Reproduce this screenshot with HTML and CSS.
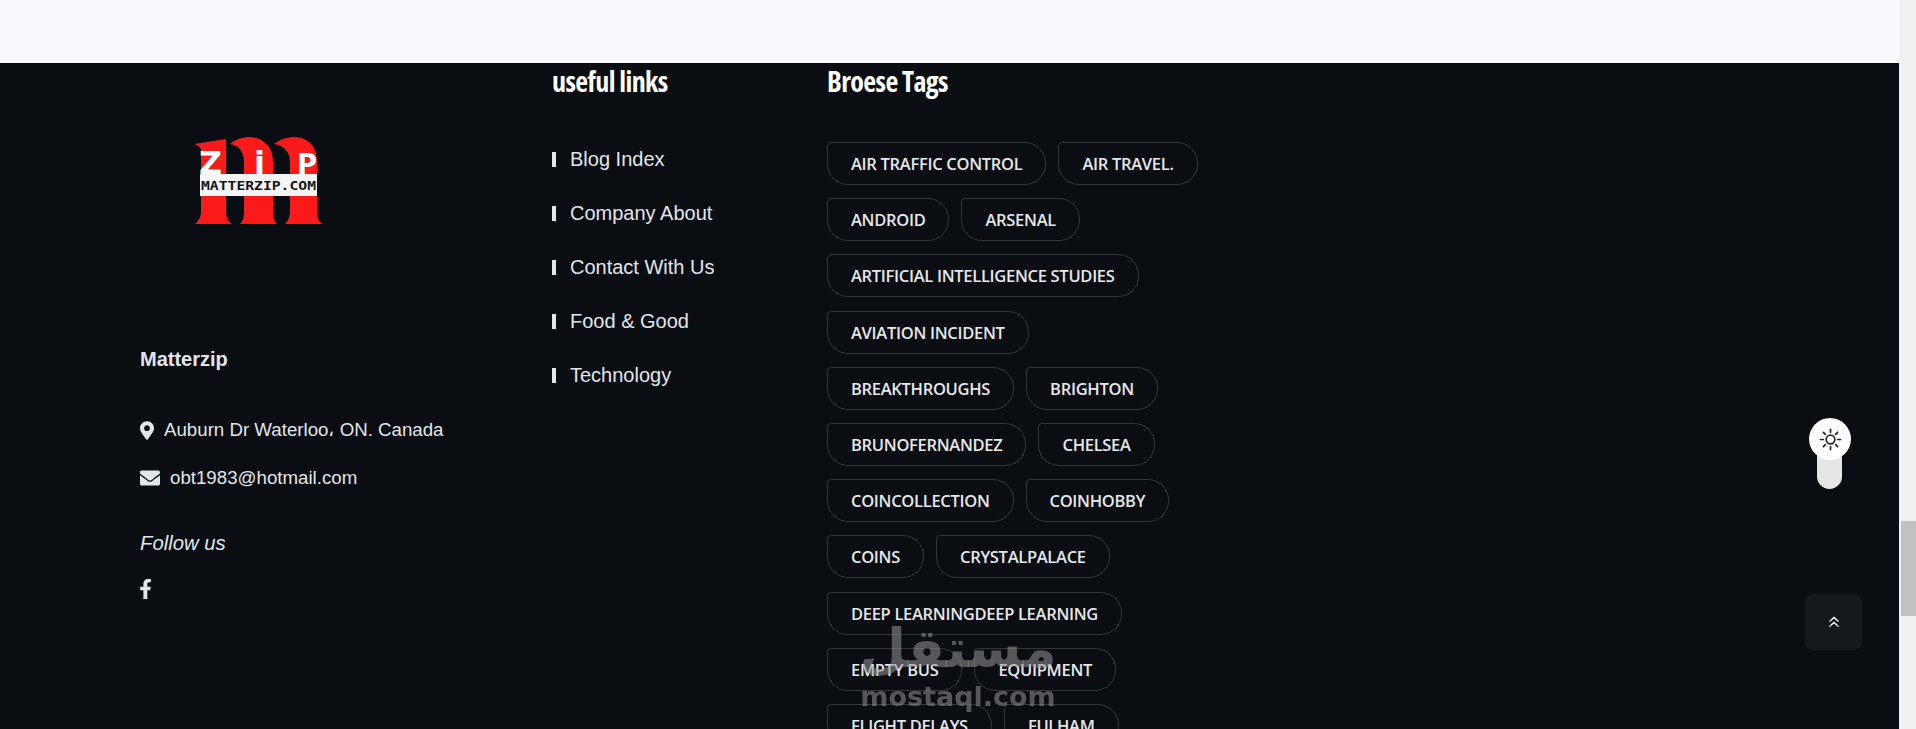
FILE: index.html
```html
<!DOCTYPE html>
<html lang="en">
<head>
<meta charset="utf-8">
<title>Matterzip footer</title>
<link rel="stylesheet" href="styles.css">
</head>
<body>
<div class="page">
  <div class="band"></div>
  <footer class="footer">
    <section class="about">
      <svg class="logo" viewBox="0 0 129 87" role="img" aria-label="Matterzip logo">
        <path class="logo-red" d="M0,7 L32,2 L32,75 C32,82 35,85 38,87 L1,87 C5,84 7,80 7,73 L7,12 C5,9 3,8 0,7Z"/>
        <path class="logo-red" d="M36,7 C45,0 55,-1 62,1 C72,4 79,12 79,25 L79,75 C79,82 81,85 83,87 L46,87 C49,84 50,80 50,75 L50,25 C50,15 45,8 36,7Z"/>
        <path class="logo-red" d="M80,7 C90,0 100,-1 107,1 C117,4 123,12 123,25 L123,75 C123,82 125,85 129,87 L91,87 C94,84 96,80 96,75 L96,25 C96,15 90,8 80,7Z"/>
        <text class="logo-big" x="5" y="37" textLength="23" lengthAdjust="spacingAndGlyphs">Z</text>
        <text class="logo-big" x="60" y="37" textLength="11" lengthAdjust="spacingAndGlyphs">i</text>
        <text class="logo-p" x="103" y="37" textLength="20" lengthAdjust="spacingAndGlyphs">P</text>
        <rect class="logo-bar" x="6" y="37" width="117" height="22"/>
        <text class="logo-url" x="7" y="53" textLength="115" lengthAdjust="spacingAndGlyphs">MATTERZIP.COM</text>
      </svg>
      <h4 class="brand">Matterzip</h4>
      <p class="contact contact-addr">
        <svg class="ic-pin" viewBox="0 0 384 512"><path d="M172.268 501.67C26.97 291.031 0 268.413 0 192 0 85.961 85.961 0 192 0s192 85.961 192 192c0 76.413-26.97 99.031-172.268 309.67-9.535 13.774-29.93 13.773-39.464 0zM192 272c44.183 0 80-35.817 80-80s-35.817-80-80-80-80 35.817-80 80 35.817 80 80 80z"/></svg>
        <span>Auburn Dr Waterloo، ON. Canada</span>
      </p>
      <p class="contact contact-mail">
        <svg class="ic-mail" viewBox="0 0 512 512"><path d="M502.3 190.8c3.9-3.1 9.7-.2 9.7 4.7V400c0 26.5-21.5 48-48 48H48c-26.5 0-48-21.5-48-48V195.6c0-5 5.7-7.8 9.7-4.7 22.4 17.4 52.1 39.5 154.1 113.6 21.1 15.4 56.7 47.8 92.2 47.6 35.7.3 72-32.8 92.3-47.6 102-74.1 131.6-96.3 154-113.7zM256 320c23.2.4 56.6-29.2 73.4-41.4 132.7-96.3 142.8-104.7 173.4-128.7 5.8-4.5 9.2-11.5 9.2-18.9v-19c0-26.5-21.5-48-48-48H48C21.5 64 0 85.5 0 112v19c0 7.4 3.4 14.3 9.2 18.9 30.6 23.9 40.7 32.4 173.4 128.7 16.8 12.2 50.2 41.8 73.4 41.4z"/></svg>
        <span>obt1983@hotmail.com</span>
      </p>
      <p class="follow">Follow us</p>
      <svg class="ic-fb" viewBox="22 0 272 512"><path d="M279.14 288l14.22-92.66h-88.91v-60.13c0-25.35 12.42-50.06 52.24-50.06h40.42V6.26S260.43 0 225.36 0c-73.22 0-121.08 44.38-121.08 124.72v70.62H22.89V288h81.39v224h100.17V288z"/></svg>
    </section>

    <section class="links">
      <h3 class="title">useful links</h3>
      <ul class="link-list">
        <li>Blog Index</li>
        <li>Company About</li>
        <li>Contact With Us</li>
        <li>Food &amp; Good</li>
        <li>Technology</li>
      </ul>
    </section>

    <section class="tags">
      <h3 class="title">Broese Tags</h3>
      <div class="tag-list">
        <a class="tag">AIR TRAFFIC CONTROL</a>
        <a class="tag">AIR TRAVEL.</a>
        <a class="tag">ANDROID</a>
        <a class="tag">ARSENAL</a>
        <a class="tag">ARTIFICIAL INTELLIGENCE STUDIES</a>
        <a class="tag">AVIATION INCIDENT</a>
        <a class="tag">BREAKTHROUGHS</a>
        <a class="tag">BRIGHTON</a>
        <a class="tag">BRUNOFERNANDEZ</a>
        <a class="tag">CHELSEA</a>
        <a class="tag">COINCOLLECTION</a>
        <a class="tag">COINHOBBY</a>
        <a class="tag">COINS</a>
        <a class="tag">CRYSTALPALACE</a>
        <a class="tag">DEEP LEARNINGDEEP LEARNING</a>
        <a class="tag">EMPTY BUS</a>
        <a class="tag">EQUIPMENT</a>
        <a class="tag">FLIGHT DELAYS</a>
        <a class="tag">FULHAM</a>
      </div>
    </section>
  </footer>

  <div class="watermark">
    <span class="wm-ar">مستقل</span>
    <span class="wm-en">mostaql.com</span>
  </div>

  <div class="toggle">
    <div class="toggle-track"></div>
    <div class="toggle-knob">
      <svg viewBox="0 0 24 24" class="ic-sun">
        <circle cx="12" cy="12" r="4.5"/>
        <path d="M12 1.5v3M12 19.5v3M1.5 12h3M19.5 12h3M4.6 4.6l2 2M17.4 17.4l2 2M4.6 19.4l2-2M17.4 6.6l2-2"/>
      </svg>
    </div>
  </div>

  <div class="to-top">
    <svg viewBox="0 0 12 12" class="ic-up"><path d="M1.5 5.5L6 1.5l4.500 4M1.5 10.500L6 6.500l4.500 4"/></svg>
  </div>
</div>
<div class="scrollbar"><div class="thumb"></div></div>
</body>
</html>
```
FILE: styles.css
```css
* { box-sizing: border-box; }
html, body { margin: 0; height: 729px; overflow: hidden; }
body {
  display: flex;
  font-family: "Liberation Sans", Arial, sans-serif;
  color: #e2e6ea;
  background: #0a0d12;
}
.page { flex: 1; height: 729px; overflow: hidden; display: flex; flex-direction: column; }
.band { height: 63px; background: #f8f9ff; flex: none; }
.footer { flex: 1; display: flex; padding-left: 140px; background: #0a0d12; overflow: hidden; }

.about { width: 412px; flex: none; padding-top: 74px; }
.logo { display: block; width: 129px; height: 87px; margin-left: 54px; }
.logo-red { fill: #fb1a1a; }
.logo-bar { fill: #f5f5f5; }
.logo-big { font: 700 32px "DejaVu Sans", sans-serif; fill: #fff; }
.logo-p { font: 700 28px "DejaVu Sans", sans-serif; fill: #fff; }
.logo-url { font: 700 12px "DejaVu Sans Mono", monospace; fill: #14171a; }
.brand { margin: 123px 0 0; font-size: 20px; line-height: 24px; font-weight: 700; }
.contact { margin: 0; display: flex; align-items: center; font-size: 18.700px; line-height: 24px; }
.contact-addr { margin-top: 47px; gap: 10px; }
.contact-mail { margin-top: 24px; gap: 10px; }
.contact svg { fill: #e2e6ea; flex: none; }
.ic-pin { width: 14px; height: 19px; }
.ic-mail { width: 20px; height: 20px; }
.follow { margin: 41px 0 0; font-size: 20.300px; line-height: 24px; font-style: italic; }
.ic-fb { display: block; width: 11px; height: 20px; margin-top: 24px; fill: #e2e6ea; }

.title {
  margin: 0;
  font: 700 28px/36px "Open Sans", sans-serif;
  font-stretch: 85%;
  letter-spacing: -0.6px;
  color: #fff;
}
.links { width: 275px; flex: none; }
.link-list { list-style: none; margin: 48px 0 0; padding: 0; display: flex; flex-direction: column; gap: 30px; }
.link-list li { display: flex; align-items: center; gap: 14px; font-size: 20px; line-height: 24px; }
.link-list li::before { content: ""; width: 4px; height: 15px; background: #e2e6ea; }

.tags { width: 375px; flex: none; }
.tag-list { display: flex; flex-wrap: wrap; gap: 13.200px 12px; margin-top: 43px; }
.tag {
  height: 43px;
  display: flex;
  align-items: center;
  padding: 0 23px;
  border: 1px solid #33363b;
  border-radius: 4px 21px 21px 21px;
  font: 600 16.500px "Open Sans", sans-serif;
  font-stretch: 92%;
  letter-spacing: -0.3px;
  color: #e6e8ea;
  white-space: nowrap;
}

.watermark {
  position: fixed;
  left: 858px;
  top: 617px;
  width: 200px;
  display: flex;
  flex-direction: column;
  align-items: center;
  color: rgba(150, 150, 150, 0.55);
  pointer-events: none;
}
.wm-ar { font: 700 54px/64px "DejaVu Sans", sans-serif; }
.wm-en { font: 700 27px/32px "DejaVu Sans", sans-serif; }

.toggle { position: fixed; left: 1809px; top: 418px; width: 42px; height: 72px; }
.toggle-track { position: absolute; left: 8px; top: 25px; width: 25px; height: 46px; border-radius: 0 0 13px 13px; background: #e6e6e6; }
.toggle-knob { position: absolute; left: 0; top: 0; width: 42px; height: 42px; border-radius: 50%; background: #fff; display: flex; align-items: center; justify-content: center; }
.ic-sun { width: 23px; height: 23px; fill: none; stroke: #23262b; stroke-width: 1.8; stroke-linecap: round; }

.to-top { position: fixed; left: 1805px; top: 594px; width: 57px; height: 56px; border-radius: 8px; background: #15191d; display: flex; align-items: center; justify-content: center; }
.ic-up { width: 12px; height: 12px; fill: none; stroke: #fff; stroke-width: 1.4; }

.scrollbar { width: 17px; flex: none; height: 729px; background: #f1f1f1; padding: 521px 0 0 2px; }
.thumb { height: 95px; background: #c1c1c1; }
```
